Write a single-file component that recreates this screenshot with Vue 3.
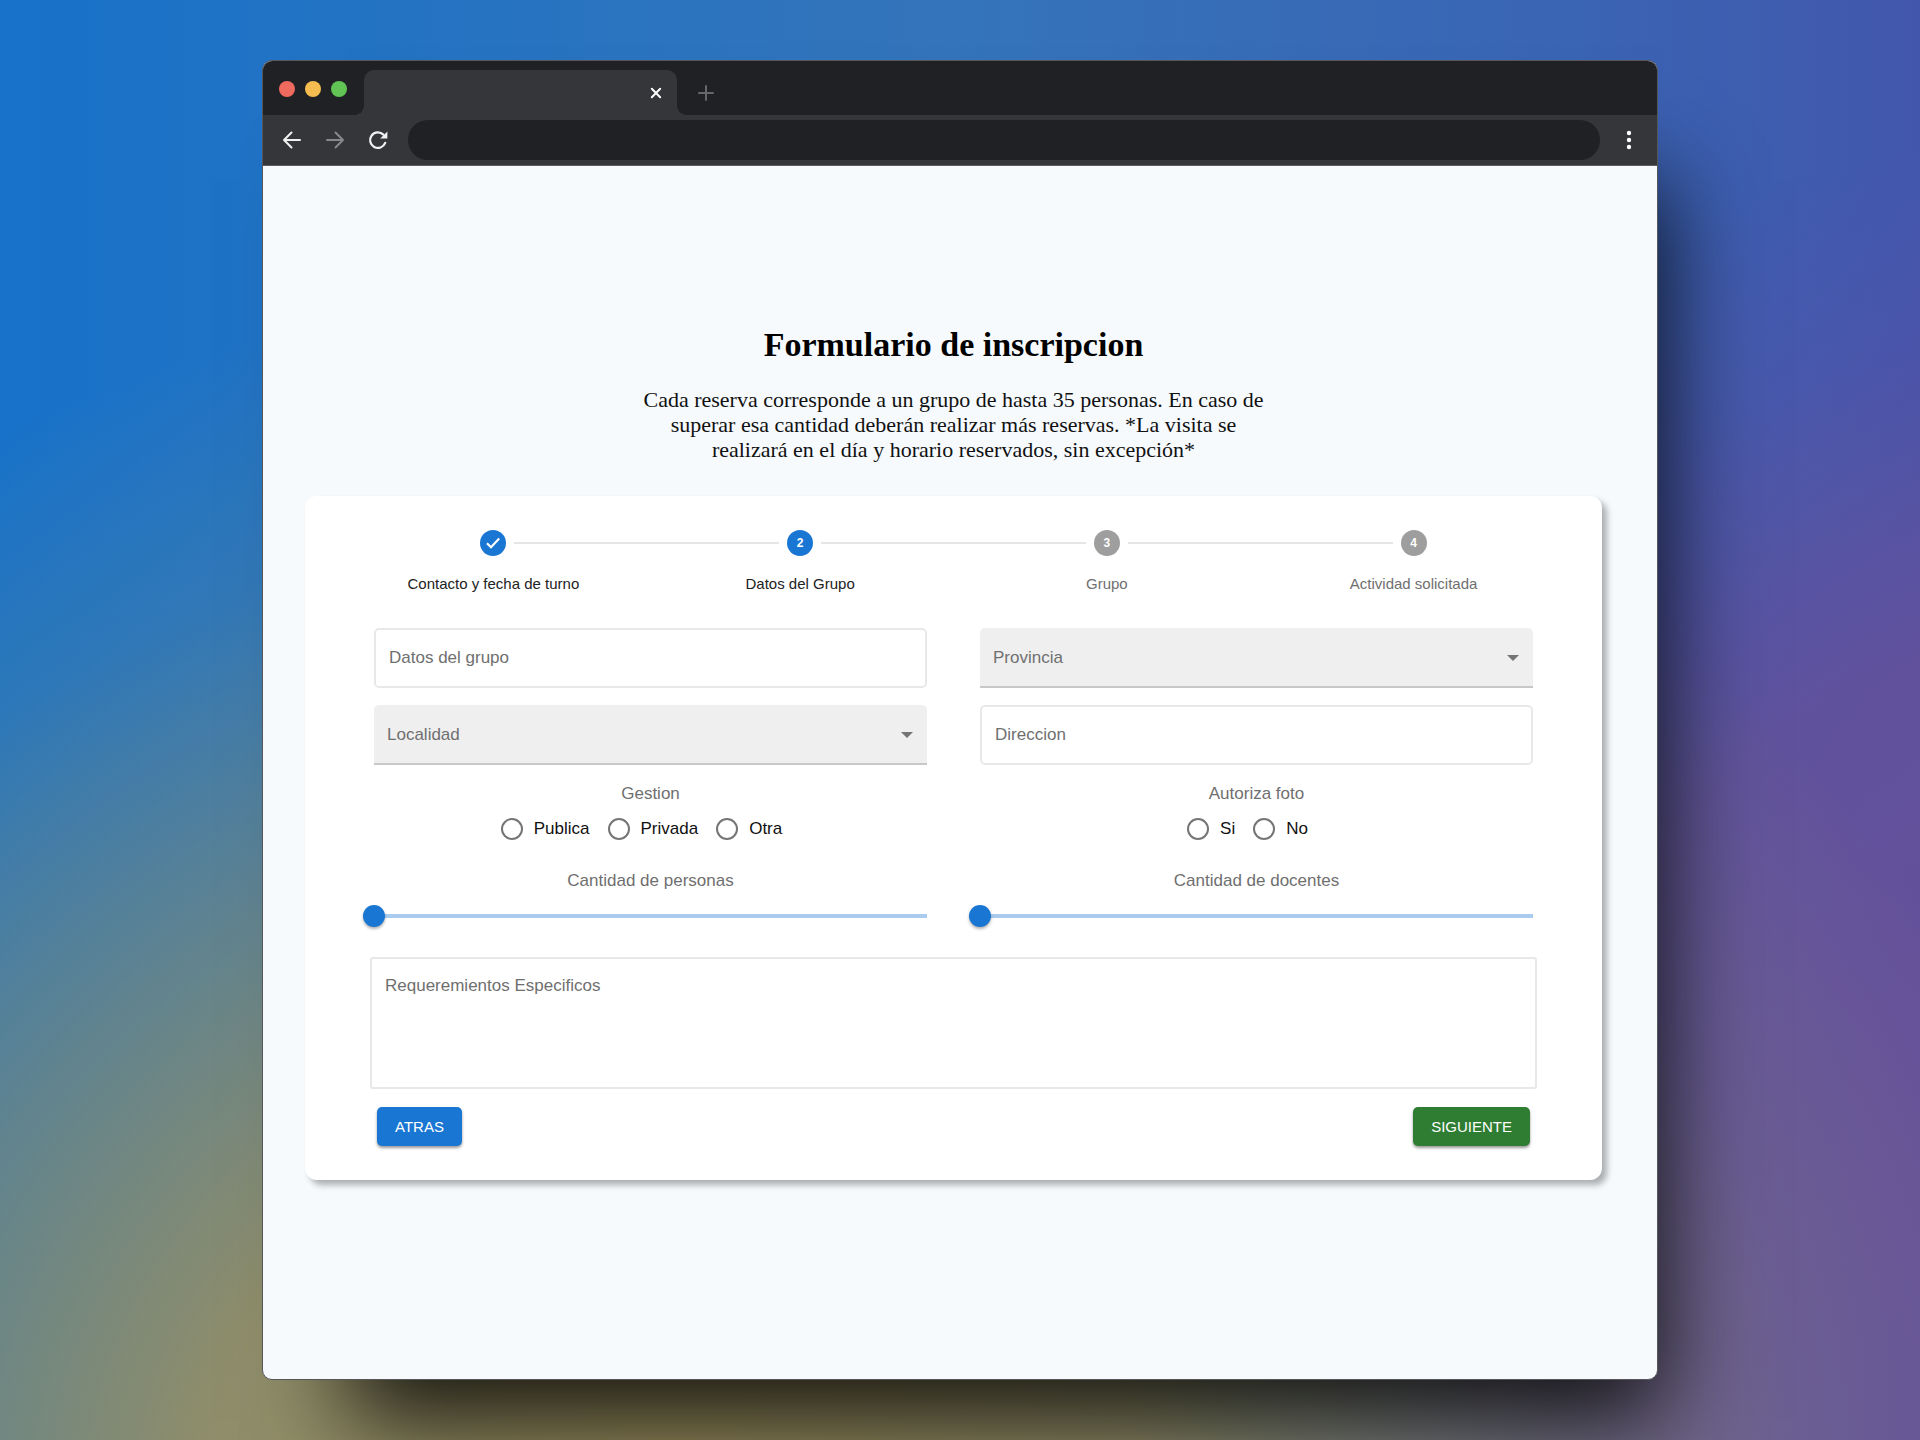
<script setup>
import { ref } from 'vue'

const steps = [
  { label: 'Contacto y fecha de turno', state: 'done' },
  { label: 'Datos del Grupo', state: 'active' },
  { label: 'Grupo', state: 'pending' },
  { label: 'Actividad solicitada', state: 'pending' },
]
const gestionOptions = ['Publica', 'Privada', 'Otra']
const fotoOptions = ['Si', 'No']

const grupo = ref('')
const provincia = ref('')
const localidad = ref('')
const direccion = ref('')
const gestion = ref('')
const foto = ref('')
const personas = ref(0)
const docentes = ref(0)
const requerimientos = ref('')
</script>

<template>
  <div class="desktop">
    <div class="window">
      <header class="tabs">
        <div class="lights">
          <span class="light red"></span>
          <span class="light amber"></span>
          <span class="light green"></span>
        </div>
        <div class="tab">
          <button class="icon-btn" type="button" aria-label="Cerrar pestaña">
            <svg width="12" height="12" viewBox="0 0 12 12" fill="none" stroke="#fff" stroke-width="2" stroke-linecap="round">
              <path d="M1.8 1.8 10.2 10.2M10.2 1.8 1.8 10.2" />
            </svg>
          </button>
        </div>
        <button class="icon-btn new-tab" type="button" aria-label="Nueva pestaña">
          <svg width="16" height="16" viewBox="0 0 16 16" fill="none" stroke="#66676b" stroke-width="2" stroke-linecap="round">
            <path d="M8 1V15M1 8H15" />
          </svg>
        </button>
      </header>

      <nav class="toolbar">
        <button class="icon-btn" type="button" aria-label="Atrás">
          <svg width="20" height="20" viewBox="0 0 20 20" fill="none" stroke="#f1f1f1" stroke-width="2" stroke-linecap="round" stroke-linejoin="round">
            <path d="M18 10H2M9.5 2.5 2 10 9.5 17.5" />
          </svg>
        </button>
        <button class="icon-btn" type="button" aria-label="Adelante">
          <svg width="20" height="20" viewBox="0 0 20 20" fill="none" stroke="#87888b" stroke-width="2" stroke-linecap="round" stroke-linejoin="round">
            <path d="M2 10H18M10.5 2.5 18 10 10.5 17.5" />
          </svg>
        </button>
        <button class="icon-btn" type="button" aria-label="Recargar">
          <svg width="20" height="20" viewBox="0 0 20 20">
            <path d="M17.2 12.9A7.8 7.8 0 1 1 15.4 4.6" fill="none" stroke="#f1f1f1" stroke-width="2.2" stroke-linecap="round" />
            <path d="M19.4 1.4V8.6H12.2Z" fill="#f1f1f1" />
          </svg>
        </button>
        <input class="address" type="text" aria-label="Dirección web" />
        <button class="icon-btn more" type="button" aria-label="Menú">
          <svg width="6" height="20" viewBox="0 0 6 20" fill="#fff">
            <circle cx="3" cy="3" r="2.2" />
            <circle cx="3" cy="10" r="2.2" />
            <circle cx="3" cy="17" r="2.2" />
          </svg>
        </button>
      </nav>

      <main class="page">
        <h1>Formulario de inscripcion</h1>
        <p class="intro">
          Cada reserva corresponde a un grupo de hasta 35 personas. En caso de superar esa cantidad
          deberán realizar más reservas. *La visita se realizará en el día y horario reservados, sin
          excepción*
        </p>

        <form class="card" @submit.prevent>
          <ol class="stepper">
            <li v-for="(step, i) in steps" :key="step.label" class="step" :class="step.state">
              <span class="rail">
                <span class="line" :class="{ hidden: i === 0 }"></span>
                <span class="dot">
                  <svg v-if="step.state === 'done'" width="16" height="14" viewBox="0 0 16 14" fill="none" stroke="#fff" stroke-width="2.2">
                    <path d="M2 7.2 6 11.2 14.2 2.6" />
                  </svg>
                  <template v-else>{{ i + 1 }}</template>
                </span>
                <span class="line" :class="{ hidden: i === steps.length - 1 }"></span>
              </span>
              <span class="step-label">{{ step.label }}</span>
            </li>
          </ol>

          <div class="fields">
            <input v-model="grupo" class="control" type="text" placeholder="Datos del grupo" aria-label="Datos del grupo" />
            <div class="select-wrap">
              <select v-model="provincia" class="control" aria-label="Provincia">
                <option value="" disabled>Provincia</option>
              </select>
              <svg class="arrow" width="12" height="6" viewBox="0 0 12 6"><path d="M0 0H12L6 6Z" fill="#757575" /></svg>
            </div>
            <div class="select-wrap">
              <select v-model="localidad" class="control" aria-label="Localidad">
                <option value="" disabled>Localidad</option>
              </select>
              <svg class="arrow" width="12" height="6" viewBox="0 0 12 6"><path d="M0 0H12L6 6Z" fill="#757575" /></svg>
            </div>
            <input v-model="direccion" class="control" type="text" placeholder="Direccion" aria-label="Direccion" />
          </div>

          <div class="groups">
            <fieldset class="group">
              <legend>Gestion</legend>
              <div class="radios">
                <label v-for="option in gestionOptions" :key="option" class="radio">
                  <input v-model="gestion" type="radio" name="gestion" :value="option" />{{ option }}
                </label>
              </div>
            </fieldset>
            <fieldset class="group">
              <legend>Autoriza foto</legend>
              <div class="radios">
                <label v-for="option in fotoOptions" :key="option" class="radio">
                  <input v-model="foto" type="radio" name="foto" :value="option" />{{ option }}
                </label>
              </div>
            </fieldset>
            <div class="group">
              <label for="personas">Cantidad de personas</label>
              <input id="personas" v-model="personas" class="slider" type="range" min="0" max="35" />
            </div>
            <div class="group">
              <label for="docentes">Cantidad de docentes</label>
              <input id="docentes" v-model="docentes" class="slider" type="range" min="0" max="35" />
            </div>
          </div>

          <textarea v-model="requerimientos" class="notes" placeholder="Requeremientos Especificos" aria-label="Requeremientos Especificos"></textarea>

          <div class="actions">
            <button class="btn back" type="button">ATRAS</button>
            <button class="btn next" type="submit">SIGUIENTE</button>
          </div>
        </form>
      </main>
    </div>
  </div>
</template>

<style>
body {
  margin: 0;
}
</style>

<style scoped>
* {
  box-sizing: border-box;
}

.desktop {
  display: grid;
  grid-template-columns: 262fr 1396fr 262fr;
  min-height: 100vh;
  padding: 60px 0;
  background:
    radial-gradient(
      ellipse 75% 85% at 35% 105%,
      rgba(158, 143, 90, 0.98) 0%,
      rgba(158, 145, 94, 0.88) 33%,
      rgba(154, 145, 96, 0.64) 50%,
      rgba(150, 145, 100, 0.5) 60%,
      rgba(140, 145, 110, 0.18) 80%,
      rgba(140, 145, 110, 0) 100%
    ),
    radial-gradient(
      ellipse 45% 70% at 105% 80%,
      #66509a 0%,
      rgba(102, 80, 154, 0.85) 50%,
      rgba(90, 80, 165, 0.35) 80%,
      rgba(90, 80, 165, 0) 100%
    ),
    linear-gradient(to right, #1872c9 0%, #3474ba 50%, #3a64b4 82%, #4257ac 100%);
}

.window {
  grid-column: 2;
  display: flex;
  flex-direction: column;
  overflow: hidden;
  border: 1px solid #55565a;
  border-radius: 10px;
  background: #f6fafd;
  box-shadow: 45px 80px 90px -40px rgba(0, 0, 0, 0.85);
}

.tabs {
  display: flex;
  align-items: flex-end;
  height: 54px;
  background: #202124;
}

.lights {
  display: flex;
  gap: 10px;
  padding: 0 17px 18px 16px;
}

.light {
  width: 16px;
  height: 16px;
  border-radius: 50%;
}

.red {
  background: #ee6a5f;
}

.amber {
  background: #f5bd4f;
}

.green {
  background: #61c454;
}

.tab {
  position: relative;
  display: flex;
  align-items: center;
  justify-content: flex-end;
  width: 313px;
  height: 45px;
  padding-right: 15px;
  border-radius: 10px 10px 0 0;
  background: #35363a;
}

.tab::before,
.tab::after {
  content: '';
  position: absolute;
  bottom: 0;
  width: 10px;
  height: 10px;
}

.tab::before {
  right: 100%;
  background: radial-gradient(circle at 0 0, transparent 10px, #35363a 10px);
}

.tab::after {
  left: 100%;
  background: radial-gradient(circle at 100% 0, transparent 10px, #35363a 10px);
}

.icon-btn {
  display: flex;
  padding: 0;
  border: 0;
  background: none;
}

.new-tab {
  margin: 0 0 14px 21px;
}

.toolbar {
  display: flex;
  align-items: center;
  gap: 23px;
  height: 51px;
  padding: 0 25px 0 19px;
  border-bottom: 1px solid #5b5c60;
  background: #35363a;
}

.address {
  flex: 1;
  height: 40px;
  margin: 0 3px 0 -3px;
  padding: 0 20px;
  border: 0;
  border-radius: 20px;
  background: #202124;
  color: #fff;
}

.page {
  flex: 1;
  display: flex;
  flex-direction: column;
  align-items: center;
  padding: 159px 55px 60px 42px;
}

h1 {
  margin: 0;
  font: bold 34px/40px 'Liberation Serif', serif;
  color: #000;
}

.intro {
  max-width: 640px;
  margin: 22px 0 0;
  font: 22px/25px 'Liberation Serif', serif;
  text-align: center;
  color: #111;
}

.card {
  align-self: stretch;
  margin-top: 34px;
  padding: 34px 35px;
  border-radius: 12px;
  background: #fff;
  box-shadow: 5px 5px 6px rgba(0, 0, 0, 0.3);
  font: 17px/20px 'Liberation Sans', sans-serif;
  color: #6f6f6f;
}

.stepper {
  display: flex;
  margin: 0;
  padding: 0;
  list-style: none;
}

.step {
  flex: 1;
  display: flex;
  flex-direction: column;
  gap: 18px;
}

.rail {
  display: flex;
  align-items: center;
  gap: 8px;
}

.line {
  flex: 1;
  height: 2px;
  background: #e6e6e6;
}

.hidden {
  visibility: hidden;
}

.dot {
  display: flex;
  align-items: center;
  justify-content: center;
  width: 26px;
  height: 26px;
  border-radius: 50%;
  background: #9e9e9e;
  font: bold 12px/26px 'Liberation Sans', sans-serif;
  color: #fff;
}

.done .dot,
.active .dot {
  background: #1976d2;
}

.step-label {
  font-size: 15px;
  text-align: center;
}

.done .step-label,
.active .step-label {
  color: #222;
}

.fields,
.groups {
  display: grid;
  grid-template-columns: 1fr 1fr;
  gap: 17px 53px;
  margin: 34px 34px 0;
}

.control {
  display: block;
  width: 100%;
  height: 60px;
  padding: 0 13px;
  border: 2px solid #e8e8e8;
  border-radius: 5px;
  outline: 0;
  background: #fff;
  font: inherit;
  color: #6f6f6f;
}

.control::placeholder,
.notes::placeholder {
  color: #6f6f6f;
  opacity: 1;
}

.select-wrap {
  position: relative;
}

select.control {
  appearance: none;
  padding: 2px 13px 0;
  border: 0;
  border-bottom: 2px solid #c8c8c8;
  border-radius: 5px 5px 0 0;
  background: #efefef;
  opacity: 1;
}

.arrow {
  position: absolute;
  top: 27px;
  right: 14px;
  pointer-events: none;
}

.groups {
  gap: 31px 53px;
  margin-top: 19px;
}

.group {
  display: flex;
  flex-direction: column;
  align-items: center;
  min-width: 0;
  margin: 0;
  padding: 0;
  border: 0;
}

.group legend {
  margin: 0 auto;
  padding: 0;
}

.radios {
  display: flex;
  justify-content: center;
  padding-top: 14px;
}

.radio {
  display: flex;
  align-items: center;
  gap: 11px;
  margin-right: 18px;
  color: #111;
}

.radio input {
  appearance: none;
  width: 22px;
  height: 22px;
  margin: 0;
  border: 2px solid #757575;
  border-radius: 50%;
}

.radio input:checked {
  border: 6px solid #1976d2;
}

.slider {
  appearance: none;
  width: calc(100% + 22px);
  height: 22px;
  margin: 14px -11px 0;
  background: linear-gradient(#a9cbee, #a9cbee) center / calc(100% - 22px) 4px no-repeat;
}

.slider::-webkit-slider-thumb {
  appearance: none;
  width: 22px;
  height: 22px;
  border-radius: 50%;
  background: #1976d2;
  box-shadow: 0 2px 3px rgba(0, 0, 0, 0.3);
}

.notes {
  display: block;
  width: calc(100% - 60px);
  height: 132px;
  margin: 30px 30px 0;
  padding: 17px 13px;
  border: 2px solid #e8e8e8;
  border-radius: 3px;
  outline: 0;
  resize: none;
  font: inherit;
  color: #6f6f6f;
}

.actions {
  display: flex;
  justify-content: space-between;
  margin: 18px 37px 0;
}

.btn {
  height: 39px;
  padding: 0 18px;
  border: 0;
  border-radius: 5px;
  box-shadow: 0 2px 3px rgba(0, 0, 0, 0.4);
  font: 500 15px/20px 'Liberation Sans', sans-serif;
  color: #fff;
}

.back {
  background: #1976d2;
}

.next {
  background: #2e7d32;
}
</style>
